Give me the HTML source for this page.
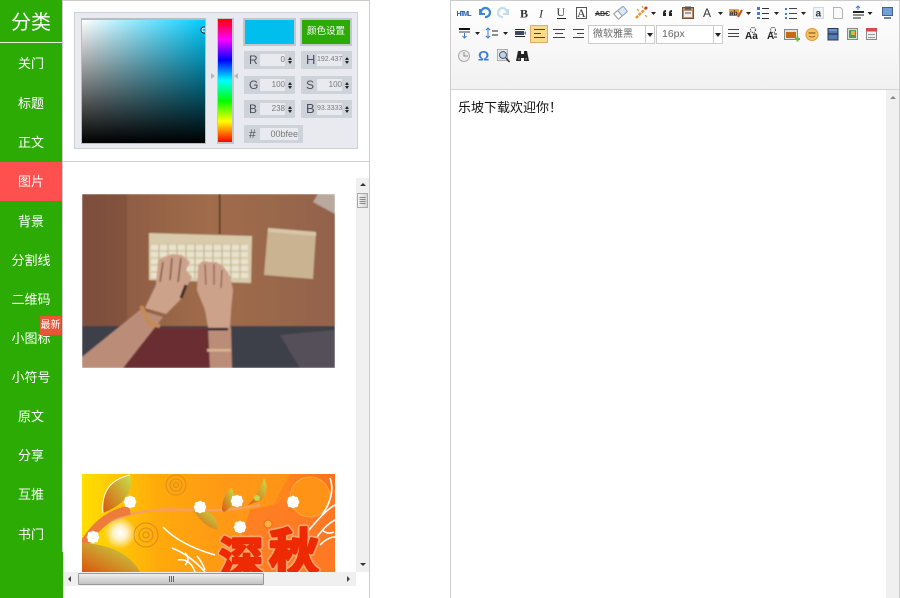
<!DOCTYPE html>
<html lang="zh">
<head>
<meta charset="utf-8">
<style>
html,body{margin:0;padding:0;background:#fff}
body{width:900px;height:598px;position:relative;overflow:hidden;font-family:"Liberation Sans","Noto Sans CJK SC",sans-serif}
.a{position:absolute}
.side{left:0;top:0;width:62px;height:598px;background:#2bab03}
.side2{left:62px;top:0;width:1px;height:552px;background:#ccc}
.side3{left:62px;top:552px;width:1px;height:46px;background:#2bab03}
.title{left:0;top:8px;width:62px;text-align:center;color:#fff;font-size:20px;line-height:30px}
.tline{left:0;top:42px;width:62px;height:1px;background:#e4f3df}
.m{left:0;width:62px;text-align:center;color:#fff;font-size:13px;line-height:20px}
.act{left:0;top:162px;width:62px;height:39px;background:#ff5050}
.badge{left:40px;top:316px;width:21px;height:19px;background:#e8563a;color:#fff;font-size:10px;line-height:19px;text-align:center;white-space:nowrap}
.cp{left:74px;top:12px;width:282px;height:135px;background:#e8eaef;border:1px solid #ccd0d7}
.sq{left:81px;top:18px;width:123px;height:123px;border:1px solid #b8bcc5;border-top-width:2px;background:linear-gradient(to top,#000,rgba(0,0,0,0)),linear-gradient(to right,#fff,#00ccff);overflow:hidden}
.hue{left:217px;top:18px;width:14px;height:123px;border:2px solid #c2c6cd;border-width:1px 2px 2px 1px;background:linear-gradient(to bottom,#f00,#f0f,#00f,#0ff,#0f0,#ff0,#f00)}
.sw{left:243px;top:18px;width:49px;height:24px;background:#00bfee;border:2px solid #c2c6cd}
.btn{left:300px;top:18px;width:48px;height:24px;background:#2bab03;border:2px solid #c2c6cd;color:#fff;font-size:9.5px;line-height:24px;text-align:center;white-space:nowrap}
.f{background:#ced2d9;height:18px;width:51px;color:#4a4f5a;font-size:12px;line-height:18px}
.f b{position:absolute;left:5px;top:0;font-weight:normal}
.f i{position:absolute;left:16px;top:3px;width:25px;height:12px;background:#e8eaef;font-style:normal;font-size:8px;line-height:12px;text-align:right;color:#777;white-space:nowrap;overflow:hidden}
.f i.s{font-size:7px}
.f u{position:absolute;left:44px;top:6px;width:5px;height:7px;display:block}
.f u:before{content:"";position:absolute;left:0;top:0;border:2.500px solid transparent;border-top:0;border-bottom:3px solid #222}
.f u:after{content:"";position:absolute;left:0;top:4px;border:2.500px solid transparent;border-bottom:0;border-top:3px solid #222}
.pl{left:63px;top:161px;width:306px;height:1px;background:#d2d2d2}
.pt{left:63px;top:0;width:307px;height:1px;background:#ccc}
.pr{left:369px;top:0;width:1px;height:598px;background:#ccc}
.vs{left:356px;top:178px;width:13px;height:394px;background:#f0f0f0}
.hs{left:63px;top:572px;width:293px;height:14px;background:#f0f0f0}
.thumb{left:78px;top:573px;width:186px;height:12px;background:linear-gradient(#eee,#c4c4c4);border:1px solid #999;box-sizing:border-box;border-radius:1px}
.vt{left:357px;top:193px;width:11px;height:15px;background:linear-gradient(to right,#f4f4f4,#d4d4d4);border:1px solid #aaa;box-sizing:border-box}
.ed{left:450px;top:0;height:598px;border:1px solid #ccc;border-bottom:0;box-sizing:border-box;width:450px}
.tb{left:451px;top:1px;width:448px;height:88px;background:linear-gradient(#fff,#f1f1f1)}
.tbl{left:451px;top:89px;width:448px;height:1px;background:#d4d4d4}
.evs{left:886px;top:90px;width:13px;height:508px;background:#f0f0f0}
.txt{left:458px;top:98px;font-size:13px;line-height:20px;color:#111;white-space:nowrap}
.hl{left:530px;top:25px;width:16px;height:16px;background:#fbd98f;border:1px solid #d9b066}
.sel{top:25px;height:17px;background:#fff;border:1px solid #ccc;font-size:10px;line-height:17px;color:#666;white-space:nowrap;overflow:hidden}
.sel span{position:absolute;left:4px;top:0}
.sel em{position:absolute;right:0;top:0;width:8px;height:17px;border-left:1px solid #ccc;background:#fff}
.sel em:after{content:"";position:absolute;left:1px;top:7px;border:3px solid transparent;border-top:4px solid #222;border-bottom:0}
svg{position:absolute;left:0;top:0;overflow:visible}
</style>
</head>
<body>
<div class="a side"></div><div class="a side2"></div><div class="a side3"></div>
<div class="a title">分类</div><div class="a tline"></div>
<div class="a act"></div>
<div class="a m" style="top:54px">关门</div>
<div class="a m" style="top:94px">标题</div>
<div class="a m" style="top:133px">正文</div>
<div class="a m" style="top:172px">图片</div>
<div class="a m" style="top:212px">背景</div>
<div class="a m" style="top:251px">分割线</div>
<div class="a m" style="top:290px">二维码</div>
<div class="a m" style="top:329px">小图标</div>
<div class="a badge">最新</div>
<div class="a m" style="top:368px">小符号</div>
<div class="a m" style="top:407px">原文</div>
<div class="a m" style="top:446px">分享</div>
<div class="a m" style="top:485px">互推</div>
<div class="a m" style="top:525px">书门</div>

<div class="a pt"></div><div class="a pr"></div><div class="a pl"></div>
<div class="a cp"></div>
<div class="a sq"><svg width="123" height="123"><circle cx="122" cy="10" r="3" fill="none" stroke="#111" stroke-width="1"/><circle cx="122" cy="10" r="2" fill="none" stroke="#fff" stroke-width="1"/></svg></div>
<div class="a hue"></div>
<div class="a sw"></div>
<div class="a btn">颜色设置</div>
<div class="a f" style="left:244px;top:51px"><b>R</b><i>0</i><u></u></div>
<div class="a f" style="left:301px;top:51px"><b style="font-size:13px">H</b><i class="s">192.437</i><u></u></div>
<div class="a f" style="left:244px;top:76px"><b>G</b><i>100</i><u></u></div>
<div class="a f" style="left:301px;top:76px"><b>S</b><i>100</i><u></u></div>
<div class="a f" style="left:244px;top:100px"><b>B</b><i>238</i><u></u></div>
<div class="a f" style="left:301px;top:100px"><b style="font-size:13px">B</b><i class="s">93.3333</i><u></u></div>
<div class="a f" style="left:244px;top:125px;width:59px"><b>#</b><i style="width:38px;font-size:9px">00bfee</i></div>

<div class="a vs"></div><div class="a hs"></div><div class="a thumb"></div><div class="a vt"></div>

<svg width="900" height="598" viewBox="0 0 900 598">
<defs>
<linearGradient id="wood" x1="0" x2="1" y1="0" y2="0"><stop offset="0" stop-color="#85553f"/><stop offset=".5" stop-color="#a06c4a"/><stop offset="1" stop-color="#93624c"/></linearGradient>
<linearGradient id="org" x1="0" x2="1" y1="0" y2="0"><stop offset="0" stop-color="#ffdf00"/><stop offset=".3" stop-color="#ffaa0a"/><stop offset=".7" stop-color="#ff8f1c"/><stop offset="1" stop-color="#fb701c"/></linearGradient>
<linearGradient id="leaf" x1="0" x2="1" y1="1" y2="0"><stop offset="0" stop-color="#d8560e"/><stop offset="1" stop-color="#c6e04a"/></linearGradient>
<radialGradient id="glow"><stop offset="0" stop-color="#fff"/><stop offset=".4" stop-color="#fff" stop-opacity=".8"/><stop offset="1" stop-color="#fff" stop-opacity="0"/></radialGradient>
<clipPath id="c1"><rect x="82" y="194" width="253" height="174"/></clipPath>
<clipPath id="c2"><rect x="82" y="474" width="253" height="98"/></clipPath>
<filter id="bl"><feGaussianBlur stdDeviation=".7"/></filter>
<g id="fl"><g fill="#fff"><circle r="2.300" cx="-4"/><circle r="2.300" cx="4"/><circle r="2.300" cy="-4"/><circle r="2.300" cy="4"/><circle r="2.300" cx="-3" cy="-3"/><circle r="2.300" cx="3" cy="3"/><circle r="2.300" cx="3" cy="-3"/><circle r="2.300" cx="-3" cy="3"/><circle r="2"/></g></g>
</defs>

<!-- keyboard photo -->
<g clip-path="url(#c1)">
<g filter="url(#bl)">
<rect x="82" y="194" width="253" height="174" fill="url(#wood)"/>
<rect x="82" y="194" width="45" height="133" fill="#75483a" opacity=".5"/>
<rect x="219" y="194" width="1.300" height="40" fill="#2a2420"/>
<polygon points="318,194 335,194 335,214 313,202" fill="#b9a89e"/>
<rect x="82" y="326" width="253" height="42" fill="#3e4049"/>
<polygon points="127,328 207,328 212,368 120,368" fill="#6b2f30"/>
<polygon points="280,335 335,330 335,368 300,368" fill="#55505a"/>
<polygon points="149,233 252,236 251,283 149,280" fill="#d8caaa"/>
<g fill="#e9e2cc">
<rect x="151" y="245" width="97" height="5"/><rect x="151" y="252" width="97" height="5"/><rect x="151" y="259" width="97" height="5"/><rect x="151" y="266" width="97" height="5"/><rect x="151" y="273" width="97" height="5"/></g>
<g stroke="#b9a98b" stroke-width="1"><path d="M159 244V279M168 244V279M177 244V279M186 244V279M195 244V279M204 244V279M213 244V279M222 244V279M231 244V279M240 244V279"/></g>
<polygon points="268,228 316,232 313,279 264,275" fill="#c9b391"/>
<polygon points="268,228 316,232 316,236 268,232" fill="#d7c6a8"/>
<polygon points="140,310 163,317 123,368 82,368 82,357" fill="#bb8d78"/>
<polygon points="208,327 231,327 232,368 210,368" fill="#bb8d78"/>
<path d="M145 308L156 285L158 260L164 257L172 254L182 255L190 262L186 270L192 277L187 286L180 300L166 314Z" fill="#cda28a"/>
<path d="M163 262L160 282M172 258L170 280M181 258L178 282" stroke="#7a5448" stroke-width="1.500" fill="none"/>
<path d="M186 285L181 298" stroke="#3e2a2a" stroke-width="3"/>
<path d="M197 290L198 265L203 261L210 262L216 262L223 266L230 276L233 290L231 310L230 327L208 327L205 310Z" fill="#cda28a"/>
<path d="M205 264L206 285M214 264L214 285M222 270L221 288" stroke="#8a6052" stroke-width="1.300" fill="none"/>
<rect x="208" y="328" width="20" height="2.500" fill="#24242a"/>
<rect x="207" y="349" width="24" height="2.500" fill="#d8b48f"/>
<path d="M141 306L150 324L160 326" stroke="#c68a55" stroke-width="4" fill="none"/>
</g>
</g>

<!-- autumn banner -->
<g clip-path="url(#c2)">
<rect x="82" y="474" width="253" height="98" fill="url(#org)"/>
<polygon points="230,474 290,474 260,530 200,540" fill="#ff9a15" opacity=".7"/>
<polygon points="250,510 335,490 335,572 230,572" fill="#ff7a25" opacity=".8"/>
<path d="M82 540Q120 505 190 510Q225 512 260 505" stroke="#f4a060" stroke-width="2.500" fill="none"/>
<path d="M82 548Q100 515 130 510" stroke="#ee7b3b" stroke-width="9" fill="none"/>
<path d="M103 513Q100 482 130 475Q136 500 103 513Z" fill="url(#leaf)"/>
<path d="M103 513Q100 482 130 475" stroke="#fff" stroke-width="1" fill="none"/>
<path d="M82 543Q125 545 140 572L82 572Z" fill="url(#leaf)"/>
<path d="M193 510Q205 528 218 530Q218 510 195 510Z" fill="url(#leaf)"/>
<path d="M222 510Q222 495 232 488Q238 505 224 512Z" fill="url(#leaf)"/>
<path d="M248 505Q258 496 264 478Q270 490 262 500Z" fill="url(#leaf)"/>
<circle cx="257" cy="498" r="3" fill="#c6d84a"/>
<circle cx="176" cy="485" r="10" fill="none" stroke="#d98a24" stroke-width="1"/><circle cx="176" cy="485" r="6" fill="none" stroke="#d98a24" stroke-width="1"/><circle cx="176" cy="485" r="2.500" fill="none" stroke="#d98a24" stroke-width="1"/>
<circle cx="146" cy="535" r="12" fill="none" stroke="#d98a24" stroke-width="1"/><circle cx="146" cy="535" r="7" fill="none" stroke="#d98a24" stroke-width="1"/><circle cx="146" cy="535" r="3" fill="none" stroke="#d98a24" stroke-width="1"/>
<circle cx="120" cy="533" r="16" fill="url(#glow)"/>
<circle cx="268" cy="524" r="4" fill="#ffb040" stroke="#f06a1e"/>
<circle cx="310" cy="497" r="20" fill="#ff9a15" stroke="#f8b04a" opacity=".8"/>
<use href="#fl" x="130" y="502"/><use href="#fl" x="200" y="507"/><use href="#fl" x="237" y="501"/><use href="#fl" x="293" y="502"/><use href="#fl" x="240" y="527"/><use href="#fl" x="93" y="537"/>
<g fill="none" stroke="#fff" stroke-width="1.600"><path d="M163 527Q180 545 215 555"/><path d="M172 548Q190 555 205 572M178 560Q190 558 195 572M185 553q6 6 0 12M197 556q5 6 8 14"/><path d="M305 535Q325 510 335 505M315 540Q325 525 335 520M330 478Q336 495 322 515M320 545q8-8 15-8M322 530q6 5 12 2"/></g>
<g font-family="'Liberation Sans','Noto Sans CJK SC',sans-serif" font-weight="bold">
<text x="219" y="574" font-size="44" fill="#f6a56a" stroke="#f6a56a" stroke-width="6" stroke-linejoin="round">深</text>
<text x="269" y="570" font-size="50" fill="#f6a56a" stroke="#f6a56a" stroke-width="6" stroke-linejoin="round">秋</text>
<text x="219" y="574" font-size="44" fill="#ee2a05" stroke="#ee2a05" stroke-width="2.500" stroke-linejoin="round">深</text>
<text x="269" y="570" font-size="50" fill="#ee2a05" stroke="#ee2a05" stroke-width="2.500" stroke-linejoin="round">秋</text>
</g>
</g>

<!-- hue arrows -->
<path d="M211 73L215 76L211 79Z" fill="#b5b8bf"/><path d="M238 73L234 76L238 79Z" fill="#b5b8bf"/>

<!-- left scrollbars details -->
<path d="M360 186L363 183L366 186Z" fill="#333"/>
<path d="M360 563L366 563L363 566Z" fill="#333"/>
<path d="M359.500 197.500H365.500M359.500 199.500H365.500M359.500 201.500H365.500M359.500 203.500H365.500" stroke="#888"/>
<path d="M169.500 576V582M171.500 576V582M173.500 576V582" stroke="#666"/>
<path d="M71 576V582L68 579Z" fill="#444"/>
<path d="M347 576V582L350 579Z" fill="#444"/>
</svg>

<div class="a ed"></div><div class="a tb"></div><div class="a tbl"></div><div class="a evs"></div>
<div class="a hl"></div>
<div class="a sel" style="left:588px;width:65px"><span>微软雅黑</span><em></em></div>
<div class="a sel" style="left:656px;width:65px"><span style="font-size:10.500px;left:5px">16px</span><em></em></div>
<div class="a txt">乐坡下载欢迎你！</div>

<svg width="900" height="598" viewBox="0 0 900 598" font-family="'Liberation Serif',serif">
<path d="M890 99L893 96L896 99Z" fill="#888"/>
<!-- Row 1 -->
<text x="456.500" y="16" font-size="7" font-weight="bold" fill="#2a5fa8" font-family="'Liberation Sans',sans-serif" textLength="15">HTML</text>
<path d="M480 9v5h5" fill="none" stroke="#3c86d8" stroke-width="2"/><path d="M481 13a4.500 4.500 0 1 1 4 4" fill="none" stroke="#3c86d8" stroke-width="2.200"/>
<path d="M508 9v5h-5" fill="none" stroke="#c5dcef" stroke-width="2"/><path d="M507 13a4.500 4.500 0 1 0 -4 4" fill="none" stroke="#c5dcef" stroke-width="2.200"/>
<text x="520" y="17.500" font-size="12" font-weight="bold" fill="#333">B</text>
<text x="539" y="17.500" font-size="12" font-style="italic" fill="#333">I</text>
<text x="556.500" y="16" font-size="12" fill="#333">U</text><path d="M557 18.500H566" stroke="#222"/>
<rect x="576.500" y="7.500" width="10" height="11" fill="#fff" stroke="#555"/><text x="577" y="17" font-size="12" fill="#333">A</text>
<text x="595" y="16" font-size="7" font-weight="bold" fill="#333" font-family="'Liberation Sans',sans-serif">ABC</text><path d="M595 13.500H608" stroke="#333"/>
<g transform="rotate(-40 621 13)"><rect x="615" y="9" width="12" height="7" rx="1" fill="#dce9f5" stroke="#7da0c4"/><rect x="615" y="9" width="5" height="7" fill="#fff" stroke="#999"/></g>
<path d="M636 18L645 9" stroke="#e8932f" stroke-width="2.500" stroke-dasharray="3 1"/><path d="M637 9l2 2M645 15l2 2M642 6l1 2" stroke="#e0b04a" stroke-width="1.500"/><circle cx="646" cy="8" r="1.500" fill="#b33"/>
<path d="M651 12h5l-2.500 3z" fill="#222"/>
<path d="M663 16v-3q0-3 3-3v2q-1 0-1 1h1v3zM669 16v-3q0-3 3-3v2q-1 0-1 1h1v3z" fill="#222"/>
<rect x="682.500" y="7.500" width="11" height="11" fill="#c98a5a" stroke="#6a5040"/><rect x="684" y="11" width="8" height="6" fill="#eee"/><rect x="685" y="6.500" width="6" height="3" fill="#555"/><path d="M685 13h6" stroke="#555"/>
<text x="703" y="17" font-size="12" fill="#333" font-family="'Liberation Sans',sans-serif">A</text>
<path d="M718 12h5l-2.500 3z" fill="#222"/>
<rect x="729" y="9" width="10" height="7" fill="#e3a93b"/><text x="729.500" y="15.500" font-size="7" font-weight="bold" fill="#333" font-family="'Liberation Sans',sans-serif">ab</text><path d="M738 17l4-7" stroke="#c94a2c" stroke-width="2"/>
<path d="M746 12h5l-2.500 3z" fill="#222"/>
<g fill="#3f7bd6"><rect x="757" y="7" width="3" height="3"/><rect x="757" y="12" width="3" height="3"/><rect x="757" y="17" width="3" height="2"/></g><path d="M762 8.500h7M762 13.500h7M762 18.500h7" stroke="#333"/>
<path d="M774 12h5l-2.500 3z" fill="#222"/>
<g fill="#3f7bd6"><rect x="785" y="8" width="2" height="2"/><rect x="785" y="13" width="2" height="2"/><rect x="785" y="17" width="2" height="2"/></g><path d="M789 8.500h8M789 13.500h8M789 18.500h8" stroke="#444"/>
<path d="M801 12h5l-2.500 3z" fill="#222"/>
<rect x="813.500" y="7.500" width="10" height="11" fill="#eef4fb" stroke="#9cbce0" stroke-dasharray="1 1"/><text x="815.500" y="16.500" font-size="10" font-weight="bold" fill="#333" font-family="'Liberation Sans',sans-serif">a</text>
<path d="M833.500 7.500h7l2 2v9h-9z" fill="#fafafa" stroke="#b4b4b4"/>
<path d="M858 6v4M856 8l2-2 2 2" stroke="#3f7bd6" fill="none"/><path d="M853 12h11" stroke="#222" stroke-width="2"/><path d="M853 15h11M853 18h8" stroke="#222"/>
<path d="M867.500 12h5l-2.500 3z" fill="#222"/>
<rect x="882.500" y="7.500" width="10" height="8" fill="#6e9fd8" stroke="#44608c"/><path d="M884 18h7" stroke="#44608c" stroke-width="1.500"/>
<!-- Row 2 -->
<path d="M459 29h11" stroke="#111" stroke-width="2"/><path d="M459 32h11" stroke="#444"/><path d="M464.500 33v5M462.500 36l2 2 2-2" stroke="#3f7bd6" fill="none"/>
<path d="M475 32h5l-2.500 3z" fill="#222"/>
<path d="M488 28v10M486 30l2-2 2 2M486 36l2 2 2-2" stroke="#3f7bd6" fill="none"/><path d="M492 31h6M492 35h6" stroke="#222"/>
<path d="M503 32h5l-2.500 3z" fill="#222"/>
<rect x="515" y="31" width="9" height="4" fill="#3c4a5c"/><path d="M515 29.500h10M515 36.500h10" stroke="#222"/><path d="M526 31v4l-2-2z" fill="#3f7bd6"/>
<path d="M534 29.500h11M534 33.500h7M534 37.500h11" stroke="#444"/>
<path d="M553 29.500h12M555 33.500h8M553 37.500h12" stroke="#444"/>
<path d="M573 29.500h11M577 33.500h7M573 37.500h11" stroke="#444"/>
<path d="M728 29.500h11M728 33.500h11M728 36.500h11" stroke="#444"/>
<text x="745" y="39" font-size="10" font-family="'Liberation Sans',sans-serif" fill="#222" font-weight="bold">Aa</text><circle cx="753" cy="30" r="2.500" fill="none" stroke="#222" stroke-dasharray="1 1"/>
<text x="767" y="39" font-size="10" font-family="'Liberation Sans',sans-serif" fill="#222" font-weight="bold">A</text><path d="M774 34h3M774 37h3" stroke="#222"/><circle cx="773" cy="30" r="2.500" fill="none" stroke="#222" stroke-dasharray="1 1"/>
<rect x="784.500" y="29.500" width="13" height="10" fill="#e0e0e0" stroke="#888"/><rect x="786" y="32" width="10" height="6" fill="#c9671c"/><path d="M795 39h5M797.500 36.500v5" stroke="#6cbb2c" stroke-width="2"/>
<circle cx="812" cy="34.500" r="6" fill="#f6c45c" stroke="#e0953a"/><path d="M808.500 33h7" stroke="#8a5a20" stroke-width="1.200"/><path d="M809 36q3 2 6 0" stroke="#a04a20" fill="#fff"/>
<rect x="828" y="28.500" width="10" height="11.500" fill="#557ab8" stroke="#2a3a55"/><path d="M828 34h10" stroke="#222"/><path d="M829 30h8" stroke="#8fb0e0"/>
<rect x="847.500" y="28.500" width="10" height="11" fill="#d8e4d0" stroke="#888"/><rect x="849" y="30" width="7" height="8" fill="#4d9a5e"/><rect x="851" y="31" width="4" height="4" fill="#e8b23a"/>
<rect x="866.500" y="28.500" width="10" height="11" fill="#eee" stroke="#888"/><rect x="866" y="28" width="11" height="3.500" fill="#d84a4a"/><path d="M868 34.500h7M868 37.500h7" stroke="#999"/>
<!-- Row 3 -->
<circle cx="464" cy="56" r="5.500" fill="#eee" stroke="#aaa"/><path d="M464 52v4h4" stroke="#888" fill="none"/>
<text x="478" y="60.500" font-size="14" font-weight="bold" fill="#3f7bd6" font-family="'Liberation Sans',sans-serif">Ω</text>
<rect x="497.500" y="49.500" width="10" height="11" fill="#e4eaf2" stroke="#aaa"/><circle cx="503" cy="55" r="3.500" fill="#bcd2ea" stroke="#556"/><path d="M506 58l3.500 4" stroke="#333" stroke-width="1.500"/>
<path d="M518 51h3v3h3v-3h3l2 10h-5v-3h-3v3h-5z" fill="#222"/><circle cx="519" cy="59" r="1.200" fill="#666"/><circle cx="526" cy="59" r="1.200" fill="#666"/>
</svg>
</body>
</html>
